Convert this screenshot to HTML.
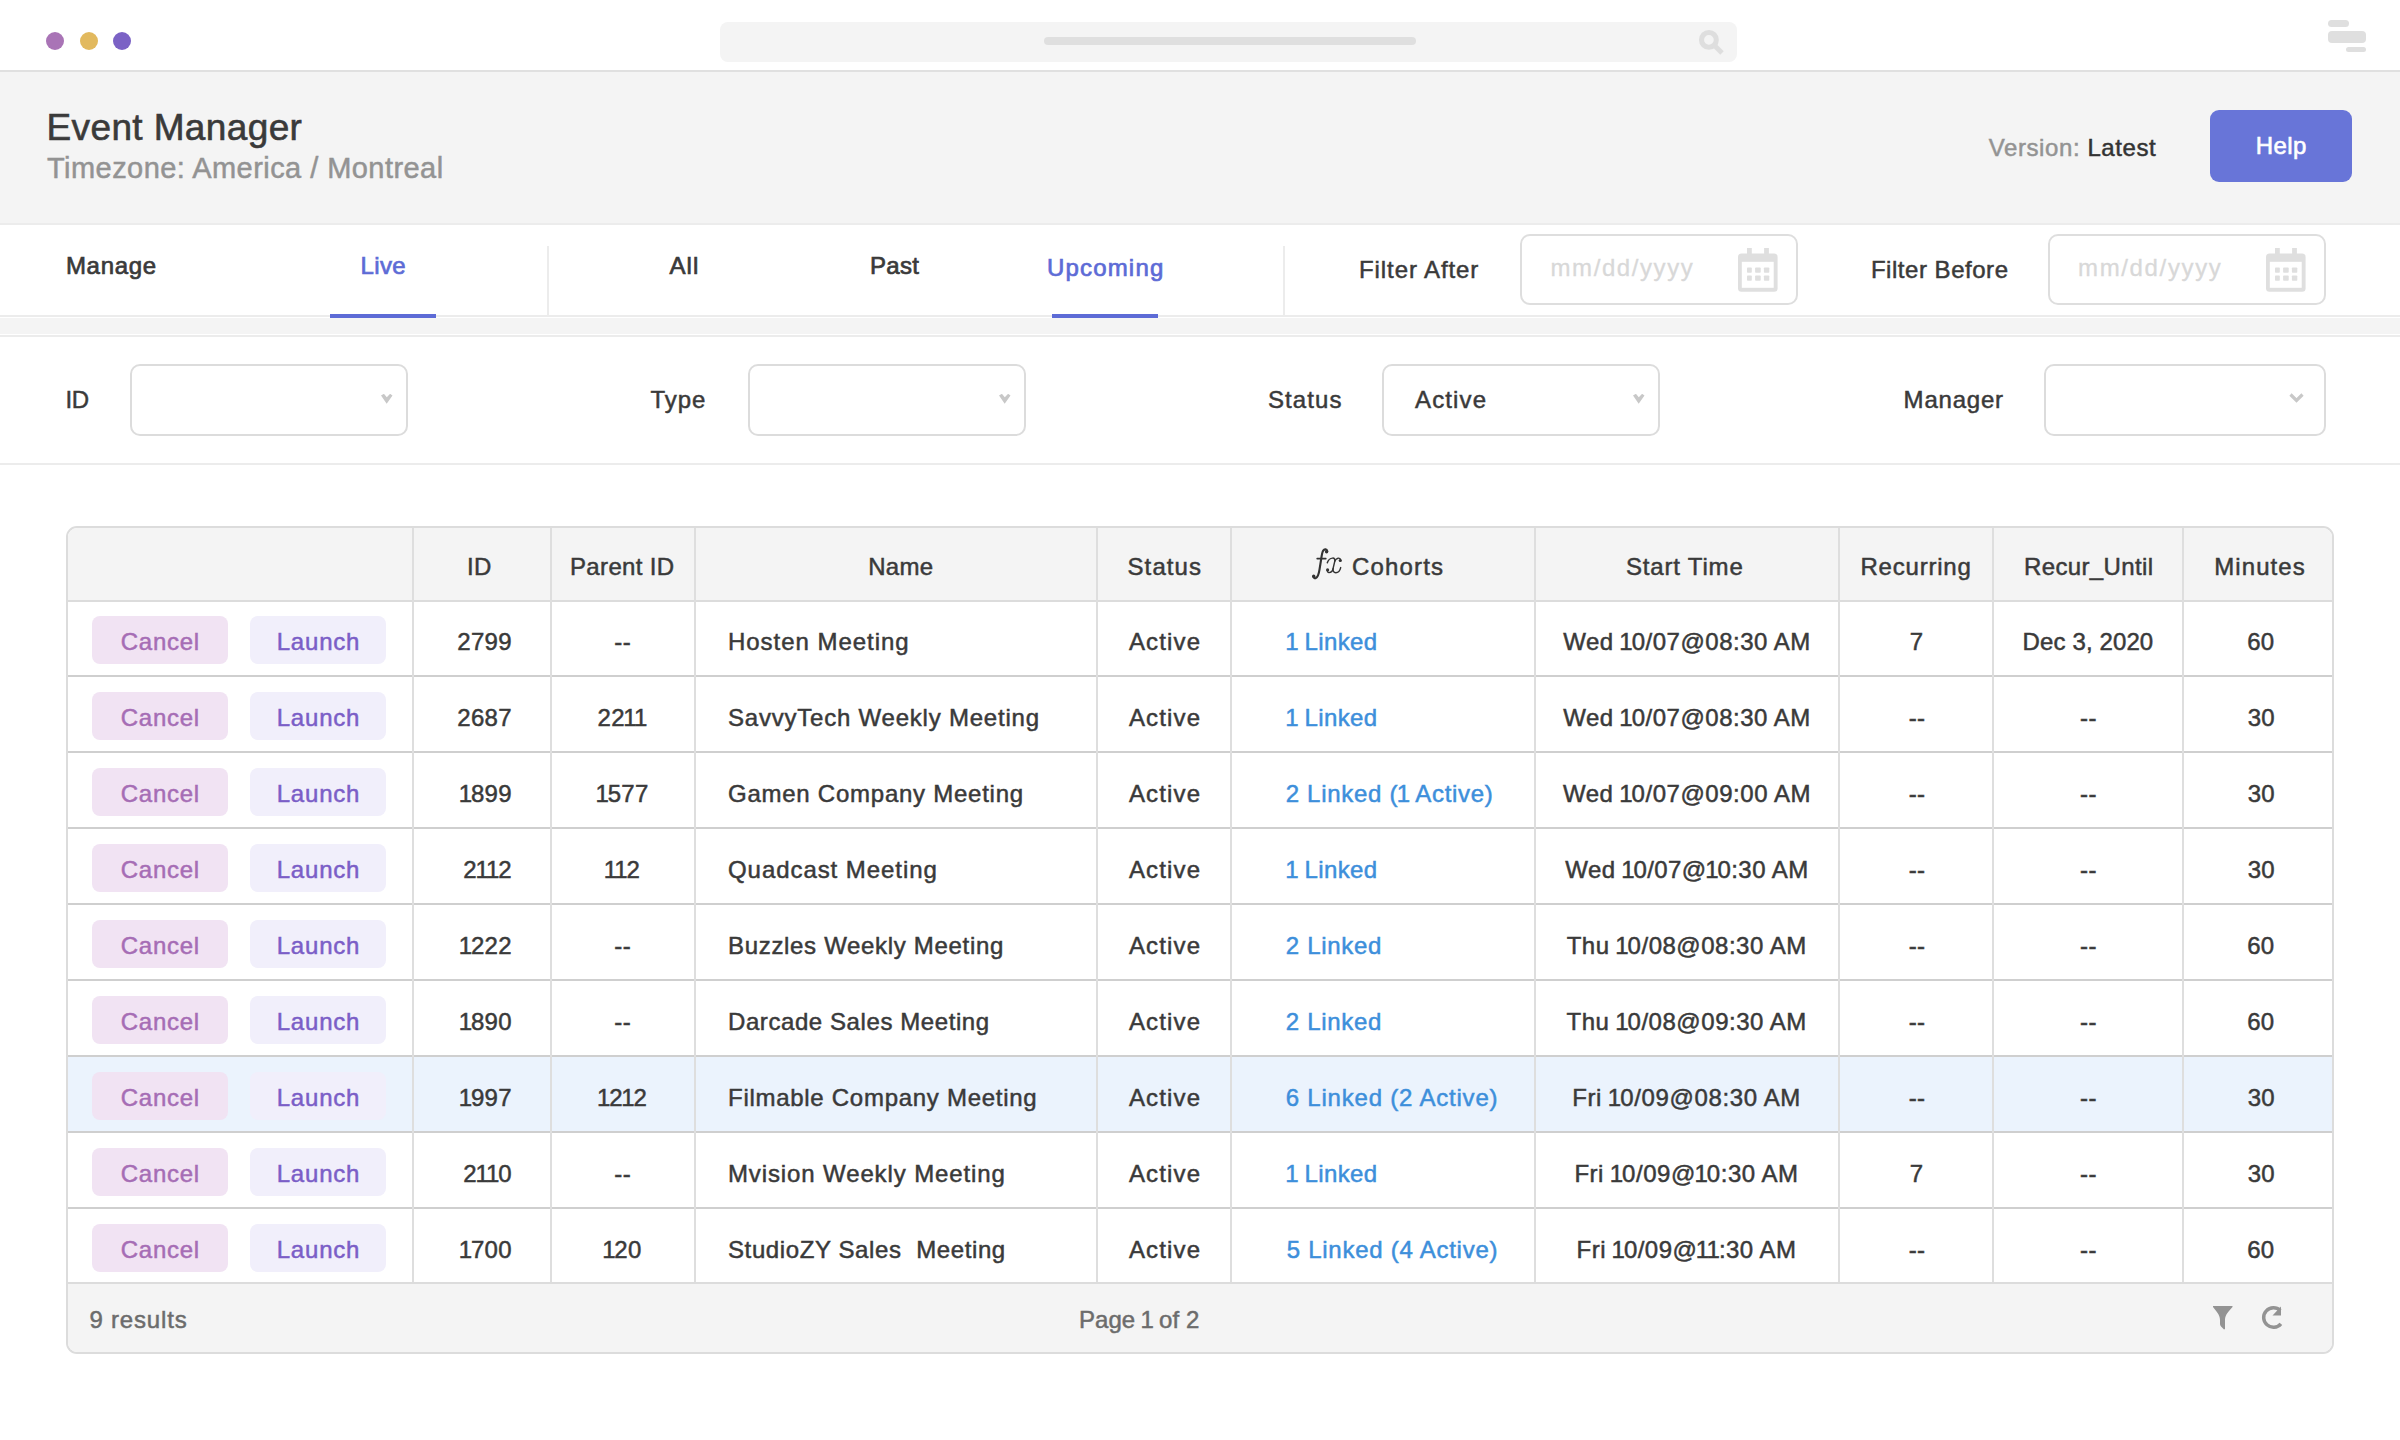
<!DOCTYPE html>
<html><head><meta charset="utf-8"><title>Event Manager</title>
<style>
html,body{margin:0;padding:0;}
body{width:2400px;height:1440px;position:relative;overflow:hidden;background:#ffffff;font-family:"Liberation Sans", sans-serif;}
</style></head><body>
<div style="position:absolute;left:0px;top:70px;width:2400px;height:2px;background:#e0e0e0"></div><div style="position:absolute;left:46px;top:32px;width:18px;height:18px;background:#a974b6;border-radius:50%"></div><div style="position:absolute;left:79.7px;top:32px;width:18.0px;height:18px;background:#e2b95e;border-radius:50%"></div><div style="position:absolute;left:113px;top:32px;width:18px;height:18px;background:#7b62c5;border-radius:50%"></div><div style="position:absolute;left:720px;top:22px;width:1017px;height:40px;background:#f4f4f4;border-radius:8px"></div><div style="position:absolute;left:1044px;top:37px;width:372px;height:8px;background:#dfdfdf;border-radius:4px"></div><svg style="position:absolute;left:1695px;top:26px" width="32" height="32" viewBox="0 0 32 32"><circle cx="13.9" cy="13.9" r="7.4" fill="none" stroke="#dedede" stroke-width="5.1"/><path d="M19.5 19.5 L27 27" stroke="#dedede" stroke-width="5"/></svg><div style="position:absolute;left:2328px;top:20px;width:21px;height:7px;background:#dfdfdf;border-radius:3.5px"></div><div style="position:absolute;left:2328px;top:31px;width:38px;height:12px;background:#dfdfdf;border-radius:4px"></div><div style="position:absolute;left:2346px;top:47px;width:20px;height:5px;background:#dfdfdf;border-radius:2.5px"></div><div style="position:absolute;left:0px;top:72px;width:2400px;height:151px;background:#f4f4f4"></div><div style="position:absolute;left:0px;top:223px;width:2400px;height:2px;background:#ececec"></div><div style="position:absolute;left:46.50px;top:68px;line-height:120px;font-family:'Liberation Sans';font-size:37px;letter-spacing:0.375px;color:#3a3a3a;-webkit-text-stroke:0.6px #3a3a3a;white-space:pre;">Event Manager</div><div style="position:absolute;left:47.00px;top:108px;line-height:120px;font-family:'Liberation Sans';font-size:29px;letter-spacing:0.444px;color:#939393;-webkit-text-stroke:0.5px #939393;white-space:pre;">Timezone: America / Montreal</div><div style="position:absolute;left:1988.70px;top:88px;line-height:120px;font-family:'Liberation Sans';font-size:24px;letter-spacing:0.593px;color:#333333;-webkit-text-stroke:0.5px #333333;white-space:pre;"><span style="color:#939393;-webkit-text-stroke-color:#939393">Version:</span> Latest</div><div style="position:absolute;left:2210px;top:110px;width:142px;height:72px;background:#6875d8;border-radius:9px"></div><div style="position:absolute;left:2255.70px;top:86px;line-height:120px;font-family:'Liberation Sans';font-size:24px;letter-spacing:0.433px;color:#ffffff;-webkit-text-stroke:0.6px #ffffff;white-space:pre;">Help</div><div style="position:absolute;left:0px;top:315px;width:2400px;height:2px;background:#ececec"></div><div style="position:absolute;left:0px;top:318px;width:2400px;height:16px;background:#f4f4f4"></div><div style="position:absolute;left:0px;top:335px;width:2400px;height:2px;background:#ececec"></div><div style="position:absolute;left:65.90px;top:206px;line-height:120px;font-family:'Liberation Sans';font-size:24px;letter-spacing:0.720px;color:#3a3a3a;-webkit-text-stroke:0.7px #3a3a3a;white-space:pre;">Manage</div><div style="position:absolute;left:360.50px;top:206px;line-height:120px;font-family:'Liberation Sans';font-size:24px;letter-spacing:0.367px;color:#5d6bd6;-webkit-text-stroke:0.7px #5d6bd6;white-space:pre;">Live</div><div style="position:absolute;left:669.50px;top:206px;line-height:120px;font-family:'Liberation Sans';font-size:24px;letter-spacing:1.100px;color:#3a3a3a;-webkit-text-stroke:0.7px #3a3a3a;white-space:pre;">All</div><div style="position:absolute;left:870.00px;top:206px;line-height:120px;font-family:'Liberation Sans';font-size:24px;letter-spacing:0.333px;color:#3a3a3a;-webkit-text-stroke:0.7px #3a3a3a;white-space:pre;">Past</div><div style="position:absolute;left:1047.00px;top:208px;line-height:120px;font-family:'Liberation Sans';font-size:24px;letter-spacing:1.171px;color:#5d6bd6;-webkit-text-stroke:0.7px #5d6bd6;white-space:pre;">Upcoming</div><div style="position:absolute;left:330px;top:314px;width:106px;height:4px;background:#5d6bd6"></div><div style="position:absolute;left:1052px;top:314px;width:106px;height:4px;background:#5d6bd6"></div><div style="position:absolute;left:547px;top:246px;width:2px;height:69px;background:#ececec"></div><div style="position:absolute;left:1283px;top:246px;width:2px;height:69px;background:#ececec"></div><div style="position:absolute;left:1359.00px;top:210px;line-height:120px;font-family:'Liberation Sans';font-size:24px;letter-spacing:0.909px;color:#3a3a3a;-webkit-text-stroke:0.5px #3a3a3a;white-space:pre;">Filter After</div><div style="position:absolute;left:1520px;top:234px;width:278px;height:71px;border:2px solid #dedede;border-radius:10px;box-sizing:border-box"></div><div style="position:absolute;left:1550.50px;top:208px;line-height:120px;font-family:'Liberation Sans';font-size:24px;letter-spacing:1.578px;color:#d8d8d8;-webkit-text-stroke:0.3px #d8d8d8;white-space:pre;">mm/dd/yyyy</div><svg style="position:absolute;left:1738px;top:248px" width="40" height="44" viewBox="0 0 40 44"><rect x="0" y="5.4" width="39.6" height="38.4" rx="3.5" fill="#dfdfdf"/><rect x="3.8" y="13.8" width="31.9" height="26" fill="#ffffff"/><rect x="9" y="0" width="4.8" height="8" fill="#dfdfdf"/><rect x="26.1" y="0" width="4.8" height="8" fill="#dfdfdf"/><rect x="9" y="19.4" width="4.8" height="5.4" rx="0.8" fill="#dfdfdf"/><rect x="17.1" y="19.4" width="5.6" height="5.4" rx="0.8" fill="#dfdfdf"/><rect x="25.9" y="19.4" width="5.4" height="5.4" rx="0.8" fill="#dfdfdf"/><rect x="9" y="27.5" width="4.8" height="5.2" rx="0.8" fill="#dfdfdf"/><rect x="17.1" y="27.5" width="5.6" height="5.2" rx="0.8" fill="#dfdfdf"/><rect x="25.9" y="27.5" width="5.4" height="5.2" rx="0.8" fill="#dfdfdf"/></svg><div style="position:absolute;left:1870.90px;top:210px;line-height:120px;font-family:'Liberation Sans';font-size:24px;letter-spacing:0.533px;color:#3a3a3a;-webkit-text-stroke:0.5px #3a3a3a;white-space:pre;">Filter Before</div><div style="position:absolute;left:2048px;top:234px;width:278px;height:71px;border:2px solid #dedede;border-radius:10px;box-sizing:border-box"></div><div style="position:absolute;left:2078.00px;top:208px;line-height:120px;font-family:'Liberation Sans';font-size:24px;letter-spacing:1.644px;color:#d8d8d8;-webkit-text-stroke:0.3px #d8d8d8;white-space:pre;">mm/dd/yyyy</div><svg style="position:absolute;left:2266px;top:248px" width="40" height="44" viewBox="0 0 40 44"><rect x="0" y="5.4" width="39.6" height="38.4" rx="3.5" fill="#dfdfdf"/><rect x="3.8" y="13.8" width="31.9" height="26" fill="#ffffff"/><rect x="9" y="0" width="4.8" height="8" fill="#dfdfdf"/><rect x="26.1" y="0" width="4.8" height="8" fill="#dfdfdf"/><rect x="9" y="19.4" width="4.8" height="5.4" rx="0.8" fill="#dfdfdf"/><rect x="17.1" y="19.4" width="5.6" height="5.4" rx="0.8" fill="#dfdfdf"/><rect x="25.9" y="19.4" width="5.4" height="5.4" rx="0.8" fill="#dfdfdf"/><rect x="9" y="27.5" width="4.8" height="5.2" rx="0.8" fill="#dfdfdf"/><rect x="17.1" y="27.5" width="5.6" height="5.2" rx="0.8" fill="#dfdfdf"/><rect x="25.9" y="27.5" width="5.4" height="5.2" rx="0.8" fill="#dfdfdf"/></svg><div style="position:absolute;left:0px;top:463px;width:2400px;height:2px;background:#ececec"></div><div style="position:absolute;left:65.50px;top:340px;line-height:120px;font-family:'Liberation Sans';font-size:24px;letter-spacing:-0.500px;color:#3a3a3a;-webkit-text-stroke:0.5px #3a3a3a;white-space:pre;">ID</div><div style="position:absolute;left:130px;top:364px;width:278px;height:72px;border:2px solid #dcdcdc;border-radius:10px;box-sizing:border-box"></div><svg style="position:absolute;left:381px;top:394px" width="12" height="10" viewBox="0 0 12 10"><path d="M0 1.4 L2.9 -0.2 L5.8 3.3 L9.1 -0.2 L11.5 1.4 L5.7 9.8 Z" fill="#c8c8c8"/></svg><div style="position:absolute;left:650.60px;top:340px;line-height:120px;font-family:'Liberation Sans';font-size:24px;letter-spacing:0.933px;color:#3a3a3a;-webkit-text-stroke:0.5px #3a3a3a;white-space:pre;">Type</div><div style="position:absolute;left:748px;top:364px;width:278px;height:72px;border:2px solid #dcdcdc;border-radius:10px;box-sizing:border-box"></div><svg style="position:absolute;left:999px;top:394px" width="12" height="10" viewBox="0 0 12 10"><path d="M0 1.4 L2.9 -0.2 L5.8 3.3 L9.1 -0.2 L11.5 1.4 L5.7 9.8 Z" fill="#c8c8c8"/></svg><div style="position:absolute;left:1268.00px;top:340px;line-height:120px;font-family:'Liberation Sans';font-size:24px;letter-spacing:1.080px;color:#3a3a3a;-webkit-text-stroke:0.5px #3a3a3a;white-space:pre;">Status</div><div style="position:absolute;left:1382px;top:364px;width:278px;height:72px;border:2px solid #dcdcdc;border-radius:10px;box-sizing:border-box"></div><svg style="position:absolute;left:1633px;top:394px" width="12" height="10" viewBox="0 0 12 10"><path d="M0 1.4 L2.9 -0.2 L5.8 3.3 L9.1 -0.2 L11.5 1.4 L5.7 9.8 Z" fill="#c8c8c8"/></svg><div style="position:absolute;left:1415.00px;top:340px;line-height:120px;font-family:'Liberation Sans';font-size:24px;letter-spacing:1.140px;color:#3a3a3a;-webkit-text-stroke:0.5px #3a3a3a;white-space:pre;">Active</div><div style="position:absolute;left:1903.60px;top:340px;line-height:120px;font-family:'Liberation Sans';font-size:24px;letter-spacing:0.800px;color:#3a3a3a;-webkit-text-stroke:0.5px #3a3a3a;white-space:pre;">Manager</div><div style="position:absolute;left:2044px;top:364px;width:282px;height:72px;border:2px solid #dcdcdc;border-radius:10px;box-sizing:border-box"></div><svg style="position:absolute;left:2289px;top:393px" width="15" height="10" viewBox="0 0 15 10"><path d="M1.5 1.5 L7.5 7.5 L13.5 1.5" fill="none" stroke="#c8c8c8" stroke-width="3.2"/></svg><div style="position:absolute;left:66px;top:526px;width:2268px;height:828px;box-sizing:border-box;border:2px solid #dcdcdc;border-radius:11px;overflow:hidden;background:#fff"><div style="position:absolute;left:0px;top:0px;width:2264px;height:72px;background:#f4f4f4"></div><div style="position:absolute;left:0px;top:72px;width:2264px;height:2px;background:#dcdcdc"></div><div style="position:absolute;left:0px;top:529px;width:2264px;height:74px;background:#ebf3fd"></div><div style="position:absolute;left:0px;top:147px;width:2264px;height:2px;background:#cfcfcf"></div><div style="position:absolute;left:0px;top:223px;width:2264px;height:2px;background:#cfcfcf"></div><div style="position:absolute;left:0px;top:299px;width:2264px;height:2px;background:#cfcfcf"></div><div style="position:absolute;left:0px;top:375px;width:2264px;height:2px;background:#cfcfcf"></div><div style="position:absolute;left:0px;top:451px;width:2264px;height:2px;background:#cfcfcf"></div><div style="position:absolute;left:0px;top:527px;width:2264px;height:2px;background:#cfcfcf"></div><div style="position:absolute;left:0px;top:603px;width:2264px;height:2px;background:#cfcfcf"></div><div style="position:absolute;left:0px;top:679px;width:2264px;height:2px;background:#cfcfcf"></div><div style="position:absolute;left:0px;top:754px;width:2264px;height:2px;background:#dcdcdc"></div><div style="position:absolute;left:0px;top:756px;width:2264px;height:68px;background:#f4f4f4"></div><div style="position:absolute;left:344px;top:0px;width:2px;height:754px;background:#dedede"></div><div style="position:absolute;left:482px;top:0px;width:2px;height:754px;background:#dedede"></div><div style="position:absolute;left:626px;top:0px;width:2px;height:754px;background:#dedede"></div><div style="position:absolute;left:1028px;top:0px;width:2px;height:754px;background:#dedede"></div><div style="position:absolute;left:1162px;top:0px;width:2px;height:754px;background:#dedede"></div><div style="position:absolute;left:1466px;top:0px;width:2px;height:754px;background:#dedede"></div><div style="position:absolute;left:1770px;top:0px;width:2px;height:754px;background:#dedede"></div><div style="position:absolute;left:1924px;top:0px;width:2px;height:754px;background:#dedede"></div><div style="position:absolute;left:2114px;top:0px;width:2px;height:754px;background:#dedede"></div></div><div style="position:absolute;left:467.00px;top:507px;line-height:120px;font-family:'Liberation Sans';font-size:24px;letter-spacing:0.400px;color:#3a3a3a;-webkit-text-stroke:0.5px #3a3a3a;white-space:pre;">ID</div><div style="position:absolute;left:570.00px;top:507px;line-height:120px;font-family:'Liberation Sans';font-size:24px;letter-spacing:0.350px;color:#3a3a3a;-webkit-text-stroke:0.5px #3a3a3a;white-space:pre;">Parent ID</div><div style="position:absolute;left:868.30px;top:507px;line-height:120px;font-family:'Liberation Sans';font-size:24px;letter-spacing:0.233px;color:#3a3a3a;-webkit-text-stroke:0.5px #3a3a3a;white-space:pre;">Name</div><div style="position:absolute;left:1127.50px;top:507px;line-height:120px;font-family:'Liberation Sans';font-size:24px;letter-spacing:1.100px;color:#3a3a3a;-webkit-text-stroke:0.5px #3a3a3a;white-space:pre;">Status</div><svg style="position:absolute;left:1305px;top:544px" width="45" height="40" viewBox="0 0 45 40"><g fill="none" stroke="#333333" stroke-linecap="round"><path d="M22.3 7.2 C21.8 5.2 19.5 4.6 18.2 6.6 C17.2 8.2 16.6 12 16.2 15 L14.6 25 C14 29 13 33.5 10.6 34.2 C9.6 34.4 8.6 33.8 8.4 32.6" stroke-width="2.1"/><path d="M12.2 14.6 L20.8 14.6" stroke-width="1.7"/><path d="M22.3 18.8 C23.2 16 25.2 14.2 27.6 14.1 C29.6 14 30.2 15.6 29.7 17.6 L28.1 24.4 C27.6 26.8 28.6 28.7 30.8 28.7 C33.2 28.7 35 26.6 35.7 23.6" stroke-width="1.45"/><path d="M35.5 16.3 C35.8 14.6 34.2 14 33 14.2 C31.4 14.5 30.3 15.8 29.8 17.3" stroke-width="1.4"/><path d="M28.2 24.5 C27.5 27.3 25.8 28.6 24 28.6 C23 28.6 22.4 28 22.5 26.2" stroke-width="1.4"/></g><g fill="#333333"><circle cx="21.6" cy="7.8" r="1.7"/><circle cx="8.7" cy="32.3" r="1.7"/><circle cx="35.3" cy="16.5" r="1.6"/><circle cx="22.6" cy="25.9" r="1.6"/></g></svg><div style="position:absolute;left:1352.00px;top:507px;line-height:120px;font-family:'Liberation Sans';font-size:24px;letter-spacing:1.167px;color:#3a3a3a;-webkit-text-stroke:0.5px #3a3a3a;white-space:pre;">Cohorts</div><div style="position:absolute;left:1625.90px;top:507px;line-height:120px;font-family:'Liberation Sans';font-size:24px;letter-spacing:0.833px;color:#3a3a3a;-webkit-text-stroke:0.5px #3a3a3a;white-space:pre;">Start Time</div><div style="position:absolute;left:1860.50px;top:507px;line-height:120px;font-family:'Liberation Sans';font-size:24px;letter-spacing:0.775px;color:#3a3a3a;-webkit-text-stroke:0.5px #3a3a3a;white-space:pre;">Recurring</div><div style="position:absolute;left:2024.00px;top:507px;line-height:120px;font-family:'Liberation Sans';font-size:24px;letter-spacing:0.370px;color:#3a3a3a;-webkit-text-stroke:0.5px #3a3a3a;white-space:pre;">Recur_Until</div><div style="position:absolute;left:2214.30px;top:507px;line-height:120px;font-family:'Liberation Sans';font-size:24px;letter-spacing:1.067px;color:#3a3a3a;-webkit-text-stroke:0.5px #3a3a3a;white-space:pre;">Minutes</div><div style="position:absolute;left:92px;top:616px;width:136px;height:48px;background:#f1e3f3;border-radius:8px"></div><div style="position:absolute;left:250px;top:616px;width:136px;height:48px;background:#f1effb;border-radius:8px"></div><div style="position:absolute;left:120.70px;top:582px;line-height:120px;font-family:'Liberation Sans';font-size:24px;letter-spacing:0.760px;color:#a66db5;-webkit-text-stroke:0.5px #a66db5;white-space:pre;">Cancel</div><div style="position:absolute;left:276.70px;top:582px;line-height:120px;font-family:'Liberation Sans';font-size:24px;letter-spacing:0.800px;color:#7b5ec7;-webkit-text-stroke:0.5px #7b5ec7;white-space:pre;">Launch</div><div style="position:absolute;left:457.30px;top:582px;line-height:120px;font-family:'Liberation Sans';font-size:24px;letter-spacing:0.300px;color:#3a3a3a;-webkit-text-stroke:0.5px #3a3a3a;white-space:pre;">2799</div><div style="position:absolute;left:614.35px;top:582px;line-height:120px;font-family:'Liberation Sans';font-size:24px;letter-spacing:0.300px;color:#3a3a3a;-webkit-text-stroke:0.5px #3a3a3a;white-space:pre;">--</div><div style="position:absolute;left:728.00px;top:582px;line-height:120px;font-family:'Liberation Sans';font-size:24px;letter-spacing:0.962px;color:#3a3a3a;-webkit-text-stroke:0.5px #3a3a3a;white-space:pre;">Hosten Meeting</div><div style="position:absolute;left:1128.90px;top:582px;line-height:120px;font-family:'Liberation Sans';font-size:24px;letter-spacing:1.160px;color:#3a3a3a;-webkit-text-stroke:0.5px #3a3a3a;white-space:pre;">Active</div><div style="position:absolute;left:1286.70px;top:582px;line-height:120px;font-family:'Liberation Sans';font-size:24px;letter-spacing:0.386px;color:#3d8fdb;-webkit-text-stroke:0.5px #3d8fdb;white-space:pre;"><span style="margin:0 -1.5px">1</span> Linked</div><div style="position:absolute;left:1563.25px;top:582px;line-height:120px;font-family:'Liberation Sans';font-size:24px;letter-spacing:0.500px;color:#3a3a3a;-webkit-text-stroke:0.5px #3a3a3a;white-space:pre;">Wed <span style="margin:0 -1.5px">1</span>0/07@08:30 AM</div><div style="position:absolute;left:1909.80px;top:582px;line-height:120px;font-family:'Liberation Sans';font-size:24px;letter-spacing:0.300px;color:#3a3a3a;-webkit-text-stroke:0.5px #3a3a3a;white-space:pre;">7</div><div style="position:absolute;left:2022.60px;top:582px;line-height:120px;font-family:'Liberation Sans';font-size:24px;letter-spacing:0.120px;color:#3a3a3a;-webkit-text-stroke:0.5px #3a3a3a;white-space:pre;">Dec 3, 2020</div><div style="position:absolute;left:2247.15px;top:582px;line-height:120px;font-family:'Liberation Sans';font-size:24px;letter-spacing:0.300px;color:#3a3a3a;-webkit-text-stroke:0.5px #3a3a3a;white-space:pre;">60</div><div style="position:absolute;left:92px;top:692px;width:136px;height:48px;background:#f1e3f3;border-radius:8px"></div><div style="position:absolute;left:250px;top:692px;width:136px;height:48px;background:#f1effb;border-radius:8px"></div><div style="position:absolute;left:120.70px;top:658px;line-height:120px;font-family:'Liberation Sans';font-size:24px;letter-spacing:0.760px;color:#a66db5;-webkit-text-stroke:0.5px #a66db5;white-space:pre;">Cancel</div><div style="position:absolute;left:276.70px;top:658px;line-height:120px;font-family:'Liberation Sans';font-size:24px;letter-spacing:0.800px;color:#7b5ec7;-webkit-text-stroke:0.5px #7b5ec7;white-space:pre;">Launch</div><div style="position:absolute;left:457.30px;top:658px;line-height:120px;font-family:'Liberation Sans';font-size:24px;letter-spacing:0.300px;color:#3a3a3a;-webkit-text-stroke:0.5px #3a3a3a;white-space:pre;">2687</div><div style="position:absolute;left:597.55px;top:658px;line-height:120px;font-family:'Liberation Sans';font-size:24px;letter-spacing:0.300px;color:#3a3a3a;-webkit-text-stroke:0.5px #3a3a3a;white-space:pre;">22<span style="margin:0 -1.5px">1</span><span style="margin:0 -1.5px">1</span></div><div style="position:absolute;left:728.00px;top:658px;line-height:120px;font-family:'Liberation Sans';font-size:24px;letter-spacing:0.783px;color:#3a3a3a;-webkit-text-stroke:0.5px #3a3a3a;white-space:pre;">SavvyTech Weekly Meeting</div><div style="position:absolute;left:1128.90px;top:658px;line-height:120px;font-family:'Liberation Sans';font-size:24px;letter-spacing:1.160px;color:#3a3a3a;-webkit-text-stroke:0.5px #3a3a3a;white-space:pre;">Active</div><div style="position:absolute;left:1286.70px;top:658px;line-height:120px;font-family:'Liberation Sans';font-size:24px;letter-spacing:0.386px;color:#3d8fdb;-webkit-text-stroke:0.5px #3d8fdb;white-space:pre;"><span style="margin:0 -1.5px">1</span> Linked</div><div style="position:absolute;left:1563.25px;top:658px;line-height:120px;font-family:'Liberation Sans';font-size:24px;letter-spacing:0.500px;color:#3a3a3a;-webkit-text-stroke:0.5px #3a3a3a;white-space:pre;">Wed <span style="margin:0 -1.5px">1</span>0/07@08:30 AM</div><div style="position:absolute;left:1908.65px;top:658px;line-height:120px;font-family:'Liberation Sans';font-size:24px;letter-spacing:0.300px;color:#3a3a3a;-webkit-text-stroke:0.5px #3a3a3a;white-space:pre;">--</div><div style="position:absolute;left:2079.95px;top:658px;line-height:120px;font-family:'Liberation Sans';font-size:24px;letter-spacing:0.500px;color:#3a3a3a;-webkit-text-stroke:0.5px #3a3a3a;white-space:pre;">--</div><div style="position:absolute;left:2247.65px;top:658px;line-height:120px;font-family:'Liberation Sans';font-size:24px;letter-spacing:0.300px;color:#3a3a3a;-webkit-text-stroke:0.5px #3a3a3a;white-space:pre;">30</div><div style="position:absolute;left:92px;top:768px;width:136px;height:48px;background:#f1e3f3;border-radius:8px"></div><div style="position:absolute;left:250px;top:768px;width:136px;height:48px;background:#f1effb;border-radius:8px"></div><div style="position:absolute;left:120.70px;top:734px;line-height:120px;font-family:'Liberation Sans';font-size:24px;letter-spacing:0.760px;color:#a66db5;-webkit-text-stroke:0.5px #a66db5;white-space:pre;">Cancel</div><div style="position:absolute;left:276.70px;top:734px;line-height:120px;font-family:'Liberation Sans';font-size:24px;letter-spacing:0.800px;color:#7b5ec7;-webkit-text-stroke:0.5px #7b5ec7;white-space:pre;">Launch</div><div style="position:absolute;left:460.30px;top:734px;line-height:120px;font-family:'Liberation Sans';font-size:24px;letter-spacing:0.300px;color:#3a3a3a;-webkit-text-stroke:0.5px #3a3a3a;white-space:pre;"><span style="margin:0 -1.5px">1</span>899</div><div style="position:absolute;left:597.05px;top:734px;line-height:120px;font-family:'Liberation Sans';font-size:24px;letter-spacing:0.300px;color:#3a3a3a;-webkit-text-stroke:0.5px #3a3a3a;white-space:pre;"><span style="margin:0 -1.5px">1</span>577</div><div style="position:absolute;left:728.00px;top:734px;line-height:120px;font-family:'Liberation Sans';font-size:24px;letter-spacing:0.750px;color:#3a3a3a;-webkit-text-stroke:0.5px #3a3a3a;white-space:pre;">Gamen Company Meeting</div><div style="position:absolute;left:1128.90px;top:734px;line-height:120px;font-family:'Liberation Sans';font-size:24px;letter-spacing:1.160px;color:#3a3a3a;-webkit-text-stroke:0.5px #3a3a3a;white-space:pre;">Active</div><div style="position:absolute;left:1285.70px;top:734px;line-height:120px;font-family:'Liberation Sans';font-size:24px;letter-spacing:0.706px;color:#3d8fdb;-webkit-text-stroke:0.5px #3d8fdb;white-space:pre;">2 Linked (<span style="margin:0 -1.5px">1</span> Active)</div><div style="position:absolute;left:1563.00px;top:734px;line-height:120px;font-family:'Liberation Sans';font-size:24px;letter-spacing:0.529px;color:#3a3a3a;-webkit-text-stroke:0.5px #3a3a3a;white-space:pre;">Wed <span style="margin:0 -1.5px">1</span>0/07@09:00 AM</div><div style="position:absolute;left:1908.65px;top:734px;line-height:120px;font-family:'Liberation Sans';font-size:24px;letter-spacing:0.300px;color:#3a3a3a;-webkit-text-stroke:0.5px #3a3a3a;white-space:pre;">--</div><div style="position:absolute;left:2079.95px;top:734px;line-height:120px;font-family:'Liberation Sans';font-size:24px;letter-spacing:0.500px;color:#3a3a3a;-webkit-text-stroke:0.5px #3a3a3a;white-space:pre;">--</div><div style="position:absolute;left:2247.65px;top:734px;line-height:120px;font-family:'Liberation Sans';font-size:24px;letter-spacing:0.300px;color:#3a3a3a;-webkit-text-stroke:0.5px #3a3a3a;white-space:pre;">30</div><div style="position:absolute;left:92px;top:844px;width:136px;height:48px;background:#f1e3f3;border-radius:8px"></div><div style="position:absolute;left:250px;top:844px;width:136px;height:48px;background:#f1effb;border-radius:8px"></div><div style="position:absolute;left:120.70px;top:810px;line-height:120px;font-family:'Liberation Sans';font-size:24px;letter-spacing:0.760px;color:#a66db5;-webkit-text-stroke:0.5px #a66db5;white-space:pre;">Cancel</div><div style="position:absolute;left:276.70px;top:810px;line-height:120px;font-family:'Liberation Sans';font-size:24px;letter-spacing:0.800px;color:#7b5ec7;-webkit-text-stroke:0.5px #7b5ec7;white-space:pre;">Launch</div><div style="position:absolute;left:463.30px;top:810px;line-height:120px;font-family:'Liberation Sans';font-size:24px;letter-spacing:0.300px;color:#3a3a3a;-webkit-text-stroke:0.5px #3a3a3a;white-space:pre;">2<span style="margin:0 -1.5px">1</span><span style="margin:0 -1.5px">1</span>2</div><div style="position:absolute;left:605.20px;top:810px;line-height:120px;font-family:'Liberation Sans';font-size:24px;letter-spacing:0.300px;color:#3a3a3a;-webkit-text-stroke:0.5px #3a3a3a;white-space:pre;"><span style="margin:0 -1.5px">1</span><span style="margin:0 -1.5px">1</span>2</div><div style="position:absolute;left:728.00px;top:810px;line-height:120px;font-family:'Liberation Sans';font-size:24px;letter-spacing:0.933px;color:#3a3a3a;-webkit-text-stroke:0.5px #3a3a3a;white-space:pre;">Quadcast Meeting</div><div style="position:absolute;left:1128.90px;top:810px;line-height:120px;font-family:'Liberation Sans';font-size:24px;letter-spacing:1.160px;color:#3a3a3a;-webkit-text-stroke:0.5px #3a3a3a;white-space:pre;">Active</div><div style="position:absolute;left:1286.70px;top:810px;line-height:120px;font-family:'Liberation Sans';font-size:24px;letter-spacing:0.386px;color:#3d8fdb;-webkit-text-stroke:0.5px #3d8fdb;white-space:pre;"><span style="margin:0 -1.5px">1</span> Linked</div><div style="position:absolute;left:1565.30px;top:810px;line-height:120px;font-family:'Liberation Sans';font-size:24px;letter-spacing:0.435px;color:#3a3a3a;-webkit-text-stroke:0.5px #3a3a3a;white-space:pre;">Wed <span style="margin:0 -1.5px">1</span>0/07@<span style="margin:0 -1.5px">1</span>0:30 AM</div><div style="position:absolute;left:1908.65px;top:810px;line-height:120px;font-family:'Liberation Sans';font-size:24px;letter-spacing:0.300px;color:#3a3a3a;-webkit-text-stroke:0.5px #3a3a3a;white-space:pre;">--</div><div style="position:absolute;left:2079.95px;top:810px;line-height:120px;font-family:'Liberation Sans';font-size:24px;letter-spacing:0.500px;color:#3a3a3a;-webkit-text-stroke:0.5px #3a3a3a;white-space:pre;">--</div><div style="position:absolute;left:2247.65px;top:810px;line-height:120px;font-family:'Liberation Sans';font-size:24px;letter-spacing:0.300px;color:#3a3a3a;-webkit-text-stroke:0.5px #3a3a3a;white-space:pre;">30</div><div style="position:absolute;left:92px;top:920px;width:136px;height:48px;background:#f1e3f3;border-radius:8px"></div><div style="position:absolute;left:250px;top:920px;width:136px;height:48px;background:#f1effb;border-radius:8px"></div><div style="position:absolute;left:120.70px;top:886px;line-height:120px;font-family:'Liberation Sans';font-size:24px;letter-spacing:0.760px;color:#a66db5;-webkit-text-stroke:0.5px #a66db5;white-space:pre;">Cancel</div><div style="position:absolute;left:276.70px;top:886px;line-height:120px;font-family:'Liberation Sans';font-size:24px;letter-spacing:0.800px;color:#7b5ec7;-webkit-text-stroke:0.5px #7b5ec7;white-space:pre;">Launch</div><div style="position:absolute;left:460.30px;top:886px;line-height:120px;font-family:'Liberation Sans';font-size:24px;letter-spacing:0.300px;color:#3a3a3a;-webkit-text-stroke:0.5px #3a3a3a;white-space:pre;"><span style="margin:0 -1.5px">1</span>222</div><div style="position:absolute;left:614.35px;top:886px;line-height:120px;font-family:'Liberation Sans';font-size:24px;letter-spacing:0.300px;color:#3a3a3a;-webkit-text-stroke:0.5px #3a3a3a;white-space:pre;">--</div><div style="position:absolute;left:728.00px;top:886px;line-height:120px;font-family:'Liberation Sans';font-size:24px;letter-spacing:0.681px;color:#3a3a3a;-webkit-text-stroke:0.5px #3a3a3a;white-space:pre;">Buzzles Weekly Meeting</div><div style="position:absolute;left:1128.90px;top:886px;line-height:120px;font-family:'Liberation Sans';font-size:24px;letter-spacing:1.160px;color:#3a3a3a;-webkit-text-stroke:0.5px #3a3a3a;white-space:pre;">Active</div><div style="position:absolute;left:1285.70px;top:886px;line-height:120px;font-family:'Liberation Sans';font-size:24px;letter-spacing:0.714px;color:#3d8fdb;-webkit-text-stroke:0.5px #3d8fdb;white-space:pre;">2 Linked</div><div style="position:absolute;left:1566.70px;top:886px;line-height:120px;font-family:'Liberation Sans';font-size:24px;letter-spacing:0.506px;color:#3a3a3a;-webkit-text-stroke:0.5px #3a3a3a;white-space:pre;">Thu <span style="margin:0 -1.5px">1</span>0/08@08:30 AM</div><div style="position:absolute;left:1908.65px;top:886px;line-height:120px;font-family:'Liberation Sans';font-size:24px;letter-spacing:0.300px;color:#3a3a3a;-webkit-text-stroke:0.5px #3a3a3a;white-space:pre;">--</div><div style="position:absolute;left:2079.95px;top:886px;line-height:120px;font-family:'Liberation Sans';font-size:24px;letter-spacing:0.500px;color:#3a3a3a;-webkit-text-stroke:0.5px #3a3a3a;white-space:pre;">--</div><div style="position:absolute;left:2247.15px;top:886px;line-height:120px;font-family:'Liberation Sans';font-size:24px;letter-spacing:0.300px;color:#3a3a3a;-webkit-text-stroke:0.5px #3a3a3a;white-space:pre;">60</div><div style="position:absolute;left:92px;top:996px;width:136px;height:48px;background:#f1e3f3;border-radius:8px"></div><div style="position:absolute;left:250px;top:996px;width:136px;height:48px;background:#f1effb;border-radius:8px"></div><div style="position:absolute;left:120.70px;top:962px;line-height:120px;font-family:'Liberation Sans';font-size:24px;letter-spacing:0.760px;color:#a66db5;-webkit-text-stroke:0.5px #a66db5;white-space:pre;">Cancel</div><div style="position:absolute;left:276.70px;top:962px;line-height:120px;font-family:'Liberation Sans';font-size:24px;letter-spacing:0.800px;color:#7b5ec7;-webkit-text-stroke:0.5px #7b5ec7;white-space:pre;">Launch</div><div style="position:absolute;left:460.30px;top:962px;line-height:120px;font-family:'Liberation Sans';font-size:24px;letter-spacing:0.300px;color:#3a3a3a;-webkit-text-stroke:0.5px #3a3a3a;white-space:pre;"><span style="margin:0 -1.5px">1</span>890</div><div style="position:absolute;left:614.35px;top:962px;line-height:120px;font-family:'Liberation Sans';font-size:24px;letter-spacing:0.300px;color:#3a3a3a;-webkit-text-stroke:0.5px #3a3a3a;white-space:pre;">--</div><div style="position:absolute;left:728.00px;top:962px;line-height:120px;font-family:'Liberation Sans';font-size:24px;letter-spacing:0.580px;color:#3a3a3a;-webkit-text-stroke:0.5px #3a3a3a;white-space:pre;">Darcade Sales Meeting</div><div style="position:absolute;left:1128.90px;top:962px;line-height:120px;font-family:'Liberation Sans';font-size:24px;letter-spacing:1.160px;color:#3a3a3a;-webkit-text-stroke:0.5px #3a3a3a;white-space:pre;">Active</div><div style="position:absolute;left:1285.70px;top:962px;line-height:120px;font-family:'Liberation Sans';font-size:24px;letter-spacing:0.714px;color:#3d8fdb;-webkit-text-stroke:0.5px #3d8fdb;white-space:pre;">2 Linked</div><div style="position:absolute;left:1566.50px;top:962px;line-height:120px;font-family:'Liberation Sans';font-size:24px;letter-spacing:0.529px;color:#3a3a3a;-webkit-text-stroke:0.5px #3a3a3a;white-space:pre;">Thu <span style="margin:0 -1.5px">1</span>0/08@09:30 AM</div><div style="position:absolute;left:1908.65px;top:962px;line-height:120px;font-family:'Liberation Sans';font-size:24px;letter-spacing:0.300px;color:#3a3a3a;-webkit-text-stroke:0.5px #3a3a3a;white-space:pre;">--</div><div style="position:absolute;left:2079.95px;top:962px;line-height:120px;font-family:'Liberation Sans';font-size:24px;letter-spacing:0.500px;color:#3a3a3a;-webkit-text-stroke:0.5px #3a3a3a;white-space:pre;">--</div><div style="position:absolute;left:2247.15px;top:962px;line-height:120px;font-family:'Liberation Sans';font-size:24px;letter-spacing:0.300px;color:#3a3a3a;-webkit-text-stroke:0.5px #3a3a3a;white-space:pre;">60</div><div style="position:absolute;left:92px;top:1072px;width:136px;height:48px;background:#f1e3f3;border-radius:8px"></div><div style="position:absolute;left:250px;top:1072px;width:136px;height:48px;background:#f1effb;border-radius:8px"></div><div style="position:absolute;left:120.70px;top:1038px;line-height:120px;font-family:'Liberation Sans';font-size:24px;letter-spacing:0.760px;color:#a66db5;-webkit-text-stroke:0.5px #a66db5;white-space:pre;">Cancel</div><div style="position:absolute;left:276.70px;top:1038px;line-height:120px;font-family:'Liberation Sans';font-size:24px;letter-spacing:0.800px;color:#7b5ec7;-webkit-text-stroke:0.5px #7b5ec7;white-space:pre;">Launch</div><div style="position:absolute;left:460.30px;top:1038px;line-height:120px;font-family:'Liberation Sans';font-size:24px;letter-spacing:0.300px;color:#3a3a3a;-webkit-text-stroke:0.5px #3a3a3a;white-space:pre;"><span style="margin:0 -1.5px">1</span>997</div><div style="position:absolute;left:598.55px;top:1038px;line-height:120px;font-family:'Liberation Sans';font-size:24px;letter-spacing:0.300px;color:#3a3a3a;-webkit-text-stroke:0.5px #3a3a3a;white-space:pre;"><span style="margin:0 -1.5px">1</span>2<span style="margin:0 -1.5px">1</span>2</div><div style="position:absolute;left:728.00px;top:1038px;line-height:120px;font-family:'Liberation Sans';font-size:24px;letter-spacing:0.717px;color:#3a3a3a;-webkit-text-stroke:0.5px #3a3a3a;white-space:pre;">Filmable Company Meeting</div><div style="position:absolute;left:1128.90px;top:1038px;line-height:120px;font-family:'Liberation Sans';font-size:24px;letter-spacing:1.160px;color:#3a3a3a;-webkit-text-stroke:0.5px #3a3a3a;white-space:pre;">Active</div><div style="position:absolute;left:1285.70px;top:1038px;line-height:120px;font-family:'Liberation Sans';font-size:24px;letter-spacing:0.800px;color:#3d8fdb;-webkit-text-stroke:0.5px #3d8fdb;white-space:pre;">6 Linked (2 Active)</div><div style="position:absolute;left:1572.15px;top:1038px;line-height:120px;font-family:'Liberation Sans';font-size:24px;letter-spacing:0.629px;color:#3a3a3a;-webkit-text-stroke:0.5px #3a3a3a;white-space:pre;">Fri <span style="margin:0 -1.5px">1</span>0/09@08:30 AM</div><div style="position:absolute;left:1908.65px;top:1038px;line-height:120px;font-family:'Liberation Sans';font-size:24px;letter-spacing:0.300px;color:#3a3a3a;-webkit-text-stroke:0.5px #3a3a3a;white-space:pre;">--</div><div style="position:absolute;left:2079.95px;top:1038px;line-height:120px;font-family:'Liberation Sans';font-size:24px;letter-spacing:0.500px;color:#3a3a3a;-webkit-text-stroke:0.5px #3a3a3a;white-space:pre;">--</div><div style="position:absolute;left:2247.65px;top:1038px;line-height:120px;font-family:'Liberation Sans';font-size:24px;letter-spacing:0.300px;color:#3a3a3a;-webkit-text-stroke:0.5px #3a3a3a;white-space:pre;">30</div><div style="position:absolute;left:92px;top:1148px;width:136px;height:48px;background:#f1e3f3;border-radius:8px"></div><div style="position:absolute;left:250px;top:1148px;width:136px;height:48px;background:#f1effb;border-radius:8px"></div><div style="position:absolute;left:120.70px;top:1114px;line-height:120px;font-family:'Liberation Sans';font-size:24px;letter-spacing:0.760px;color:#a66db5;-webkit-text-stroke:0.5px #a66db5;white-space:pre;">Cancel</div><div style="position:absolute;left:276.70px;top:1114px;line-height:120px;font-family:'Liberation Sans';font-size:24px;letter-spacing:0.800px;color:#7b5ec7;-webkit-text-stroke:0.5px #7b5ec7;white-space:pre;">Launch</div><div style="position:absolute;left:463.30px;top:1114px;line-height:120px;font-family:'Liberation Sans';font-size:24px;letter-spacing:0.300px;color:#3a3a3a;-webkit-text-stroke:0.5px #3a3a3a;white-space:pre;">2<span style="margin:0 -1.5px">1</span><span style="margin:0 -1.5px">1</span>0</div><div style="position:absolute;left:614.35px;top:1114px;line-height:120px;font-family:'Liberation Sans';font-size:24px;letter-spacing:0.300px;color:#3a3a3a;-webkit-text-stroke:0.5px #3a3a3a;white-space:pre;">--</div><div style="position:absolute;left:728.00px;top:1114px;line-height:120px;font-family:'Liberation Sans';font-size:24px;letter-spacing:0.881px;color:#3a3a3a;-webkit-text-stroke:0.5px #3a3a3a;white-space:pre;">Mvision Weekly Meeting</div><div style="position:absolute;left:1128.90px;top:1114px;line-height:120px;font-family:'Liberation Sans';font-size:24px;letter-spacing:1.160px;color:#3a3a3a;-webkit-text-stroke:0.5px #3a3a3a;white-space:pre;">Active</div><div style="position:absolute;left:1286.70px;top:1114px;line-height:120px;font-family:'Liberation Sans';font-size:24px;letter-spacing:0.386px;color:#3d8fdb;-webkit-text-stroke:0.5px #3d8fdb;white-space:pre;"><span style="margin:0 -1.5px">1</span> Linked</div><div style="position:absolute;left:1574.40px;top:1114px;line-height:120px;font-family:'Liberation Sans';font-size:24px;letter-spacing:0.541px;color:#3a3a3a;-webkit-text-stroke:0.5px #3a3a3a;white-space:pre;">Fri <span style="margin:0 -1.5px">1</span>0/09@<span style="margin:0 -1.5px">1</span>0:30 AM</div><div style="position:absolute;left:1909.80px;top:1114px;line-height:120px;font-family:'Liberation Sans';font-size:24px;letter-spacing:0.300px;color:#3a3a3a;-webkit-text-stroke:0.5px #3a3a3a;white-space:pre;">7</div><div style="position:absolute;left:2079.95px;top:1114px;line-height:120px;font-family:'Liberation Sans';font-size:24px;letter-spacing:0.500px;color:#3a3a3a;-webkit-text-stroke:0.5px #3a3a3a;white-space:pre;">--</div><div style="position:absolute;left:2247.65px;top:1114px;line-height:120px;font-family:'Liberation Sans';font-size:24px;letter-spacing:0.300px;color:#3a3a3a;-webkit-text-stroke:0.5px #3a3a3a;white-space:pre;">30</div><div style="position:absolute;left:92px;top:1224px;width:136px;height:48px;background:#f1e3f3;border-radius:8px"></div><div style="position:absolute;left:250px;top:1224px;width:136px;height:48px;background:#f1effb;border-radius:8px"></div><div style="position:absolute;left:120.70px;top:1190px;line-height:120px;font-family:'Liberation Sans';font-size:24px;letter-spacing:0.760px;color:#a66db5;-webkit-text-stroke:0.5px #a66db5;white-space:pre;">Cancel</div><div style="position:absolute;left:276.70px;top:1190px;line-height:120px;font-family:'Liberation Sans';font-size:24px;letter-spacing:0.800px;color:#7b5ec7;-webkit-text-stroke:0.5px #7b5ec7;white-space:pre;">Launch</div><div style="position:absolute;left:460.30px;top:1190px;line-height:120px;font-family:'Liberation Sans';font-size:24px;letter-spacing:0.300px;color:#3a3a3a;-webkit-text-stroke:0.5px #3a3a3a;white-space:pre;"><span style="margin:0 -1.5px">1</span>700</div><div style="position:absolute;left:603.70px;top:1190px;line-height:120px;font-family:'Liberation Sans';font-size:24px;letter-spacing:0.300px;color:#3a3a3a;-webkit-text-stroke:0.5px #3a3a3a;white-space:pre;"><span style="margin:0 -1.5px">1</span>20</div><div style="position:absolute;left:728.00px;top:1190px;line-height:120px;font-family:'Liberation Sans';font-size:24px;letter-spacing:0.614px;color:#3a3a3a;-webkit-text-stroke:0.5px #3a3a3a;white-space:pre;">StudioZY Sales  Meeting</div><div style="position:absolute;left:1128.90px;top:1190px;line-height:120px;font-family:'Liberation Sans';font-size:24px;letter-spacing:1.160px;color:#3a3a3a;-webkit-text-stroke:0.5px #3a3a3a;white-space:pre;">Active</div><div style="position:absolute;left:1286.70px;top:1190px;line-height:120px;font-family:'Liberation Sans';font-size:24px;letter-spacing:0.744px;color:#3d8fdb;-webkit-text-stroke:0.5px #3d8fdb;white-space:pre;">5 Linked (4 Active)</div><div style="position:absolute;left:1576.60px;top:1190px;line-height:120px;font-family:'Liberation Sans';font-size:24px;letter-spacing:0.459px;color:#3a3a3a;-webkit-text-stroke:0.5px #3a3a3a;white-space:pre;">Fri <span style="margin:0 -1.5px">1</span>0/09@<span style="margin:0 -1.5px">1</span><span style="margin:0 -1.5px">1</span>:30 AM</div><div style="position:absolute;left:1908.65px;top:1190px;line-height:120px;font-family:'Liberation Sans';font-size:24px;letter-spacing:0.300px;color:#3a3a3a;-webkit-text-stroke:0.5px #3a3a3a;white-space:pre;">--</div><div style="position:absolute;left:2079.95px;top:1190px;line-height:120px;font-family:'Liberation Sans';font-size:24px;letter-spacing:0.500px;color:#3a3a3a;-webkit-text-stroke:0.5px #3a3a3a;white-space:pre;">--</div><div style="position:absolute;left:2247.15px;top:1190px;line-height:120px;font-family:'Liberation Sans';font-size:24px;letter-spacing:0.300px;color:#3a3a3a;-webkit-text-stroke:0.5px #3a3a3a;white-space:pre;">60</div><div style="position:absolute;left:89.40px;top:1260px;line-height:120px;font-family:'Liberation Sans';font-size:24px;letter-spacing:0.825px;color:#6c6c6c;-webkit-text-stroke:0.5px #6c6c6c;white-space:pre;">9 results</div><div style="position:absolute;left:1079.00px;top:1260px;line-height:120px;font-family:'Liberation Sans';font-size:24px;letter-spacing:0.050px;color:#6c6c6c;-webkit-text-stroke:0.5px #6c6c6c;white-space:pre;">Page <span style="margin:0 -1.5px">1</span> of 2</div><svg style="position:absolute;left:2213px;top:1306px" width="20" height="24" viewBox="0 0 20 24"><path d="M0 0 H19.5 L19.5 1 C16 5 12 8.5 12 14 V23 L11 23.5 C8.5 21 7 19.5 7 18 V14 C7 8.5 3 5 0 1 Z" fill="#939393"/></svg><svg style="position:absolute;left:2260px;top:1304px" width="26" height="28" viewBox="0 0 26 28"><path d="M20.9 19.8 A9.75 9.75 0 1 1 20.3 6.6" fill="none" stroke="#939393" stroke-width="3.5"/><path d="M21 2.5 V11.5 H12.5 Z" fill="#939393"/></svg>
</body></html>
